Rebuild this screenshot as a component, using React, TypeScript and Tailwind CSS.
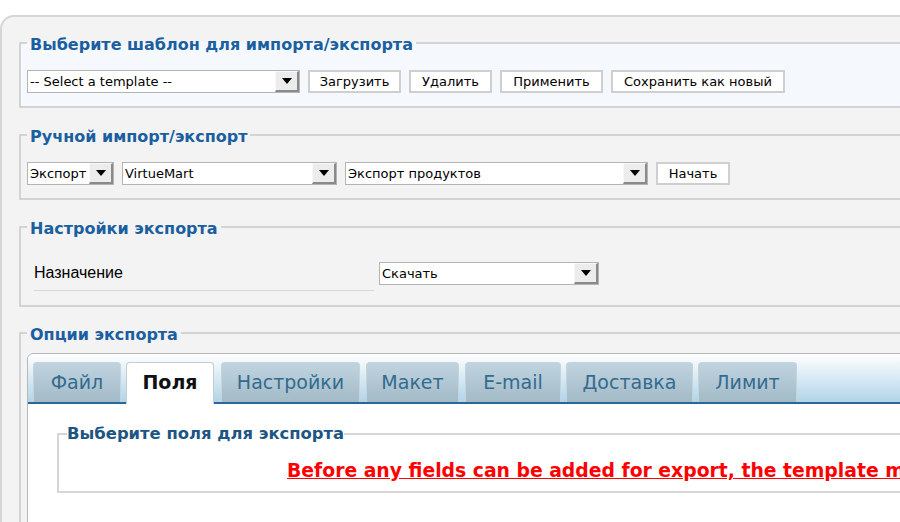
import React from "react";

const legendFont = { fontFamily: '"DejaVu Sans", Verdana, sans-serif' };
const uiFont = { fontFamily: '"Liberation Sans", Arial, sans-serif' };

const Arrow = () => (
  <div className="flex h-full w-[24px] shrink-0 items-center justify-center border-t border-l border-t-[#f8f8f8] border-l-[#f8f8f8] border-r-2 border-b-2 border-r-[#8a8a8a] border-b-[#8a8a8a] bg-[#ececec]">
    <svg width="10" height="6" viewBox="0 0 10 6">
      <path d="M0 0h10L5 6z" fill="#000" />
    </svg>
  </div>
);

const Select = ({ label, width }: { label: string; width: string }) => (
  <div
    className={`flex h-[23px] items-stretch border border-[#b4b4b4] bg-white ${width}`}
    style={legendFont}
  >
    <span className="flex flex-1 items-center overflow-hidden whitespace-nowrap pl-[2px] text-[13px] text-black">
      {label}
    </span>
    <Arrow />
  </div>
);

const Btn = ({ label, width }: { label: string; width: string }) => (
  <button
    className={`h-[23px] whitespace-nowrap border-2 border-[#cfcfcf] bg-white text-[13px] text-black ${width}`}
    style={legendFont}
  >
    {label}
  </button>
);

const Box = ({
  title,
  children,
  bg,
  className,
}: {
  title: string;
  children: React.ReactNode;
  bg: string;
  className?: string;
}) => (
  <fieldset className={`border-2 border-[#d3d3d3] px-[6px] ${bg} ${className ?? ""}`}>
    <legend
      className="px-[3px] text-[16px] font-bold leading-[20px] text-[#1b5fa0]"
      style={legendFont}
    >
      <span className="relative top-[2px]">{title}</span>
    </legend>
    {children}
  </fieldset>
);

const tabs = [
  { name: "Файл", w: "w-[88px]", m: "ml-0" },
  { name: "Поля", w: "w-[88px]", m: "ml-[5px]", active: true },
  { name: "Настройки", w: "w-[139px]", m: "ml-[7px]" },
  { name: "Макет", w: "w-[93px]", m: "ml-[6px]" },
  { name: "E-mail", w: "w-[96px]", m: "ml-[6px]" },
  { name: "Доставка", w: "w-[127px]", m: "ml-[5px]" },
  { name: "Лимит", w: "w-[99px]", m: "ml-[5px]" },
];

export default function App() {
  return (
    <div className="h-[522px] w-[900px] overflow-hidden bg-white">
      <div className="mt-[15px] w-[1300px] rounded-tl-[14px] border-2 border-[#d6d6d6] bg-[#f3f3f3] pl-[17px] pt-[16px] pb-[40px]">
        <Box title="Выберите шаблон для импорта/экспорта" bg="bg-[#f5f9fd]" className="pt-[17px] pb-[13px]">
          <div className="flex items-center gap-[8px]">
            <Select label="-- Select a template --" width="w-[273px]" />
            <Btn label="Загрузить" width="w-[93px]" />
            <Btn label="Удалить" width="w-[83px]" />
            <Btn label="Применить" width="w-[103px]" />
            <Btn label="Сохранить как новый" width="w-[174px]" />
          </div>
        </Box>

        <Box title="Ручной импорт/экспорт" bg="bg-[#f3f3f3]" className="mt-[17px] pt-[17px] pb-[13px]">
          <div className="flex items-center gap-[8px]">
            <Select label="Экспорт" width="w-[87px]" />
            <Select label="VirtueMart" width="w-[215px]" />
            <Select label="Экспорт продуктов" width="w-[303px]" />
            <Btn label="Начать" width="w-[74px]" />
          </div>
        </Box>

        <Box title="Настройки экспорта" bg="bg-[#f3f3f3]" className="mt-[17px] pt-[21px] pb-[14px]">
          <div className="flex items-start gap-[5px] pl-[7px]">
            <div
              className="flex h-[33px] w-[340px] items-center border-b border-[#d8d8d8] pb-[3px] text-[16px] text-black"
              style={uiFont}
            >
              Назначение
            </div>
            <div className="mt-[4px]">
              <Select label="Скачать" width="w-[220px]" />
            </div>
          </div>
        </Box>

        <Box title="Опции экспорта" bg="bg-[#f3f3f3]" className="mt-[16px] pt-[10px] pb-[20px]">
          <div className="rounded-tl-[6px] border border-[#b8b8b8] bg-white">
            <div className="flex items-end rounded-tl-[6px] border-b-2 border-[#2b6796] bg-gradient-to-b from-white to-[#b1d4e9] pl-[5px] pt-[8px]">
              {tabs.map((t) =>
                t.active ? (
                  <div
                    key={t.name}
                    className={`-mb-[2px] flex h-[42px] items-center justify-center rounded-t-[4px] border border-b-0 border-[#c3cdd3] bg-white pb-[2px] text-[19px] font-bold text-[#111] ${t.w} ${t.m}`}
                    style={legendFont}
                  >
                    {t.name}
                  </div>
                ) : (
                  <div
                    key={t.name}
                    className={`flex h-[40px] items-center justify-center rounded-t-[4px] border border-b-0 border-[#c6d3da] bg-gradient-to-b from-[#bfd4df] to-[#a3bac7] text-[19px] text-[#336b8f] ${t.w} ${t.m}`}
                    style={legendFont}
                  >
                    {t.name}
                  </div>
                )
              )}
            </div>
            <div className="pl-[29px] pt-[21px] pb-[40px]">
              <fieldset className="border-2 border-[#d6d6d6] pl-[8px] pt-[15px] pb-[9px]">
                <legend
                  className="text-[16.4px] font-bold leading-[18px] text-[#1d5583]"
                  style={legendFont}
                >
                  Выберите поля для экспорта
                </legend>
                <p
                  className="whitespace-nowrap pl-[220px] pt-[1px] text-[18.8px] font-bold leading-[23px] text-[#ff0000] underline"
                  style={legendFont}
                >
                  Before any fields can be added for export, the template must be saved first.
                </p>
              </fieldset>
            </div>
          </div>
        </Box>
      </div>
    </div>
  );
}
